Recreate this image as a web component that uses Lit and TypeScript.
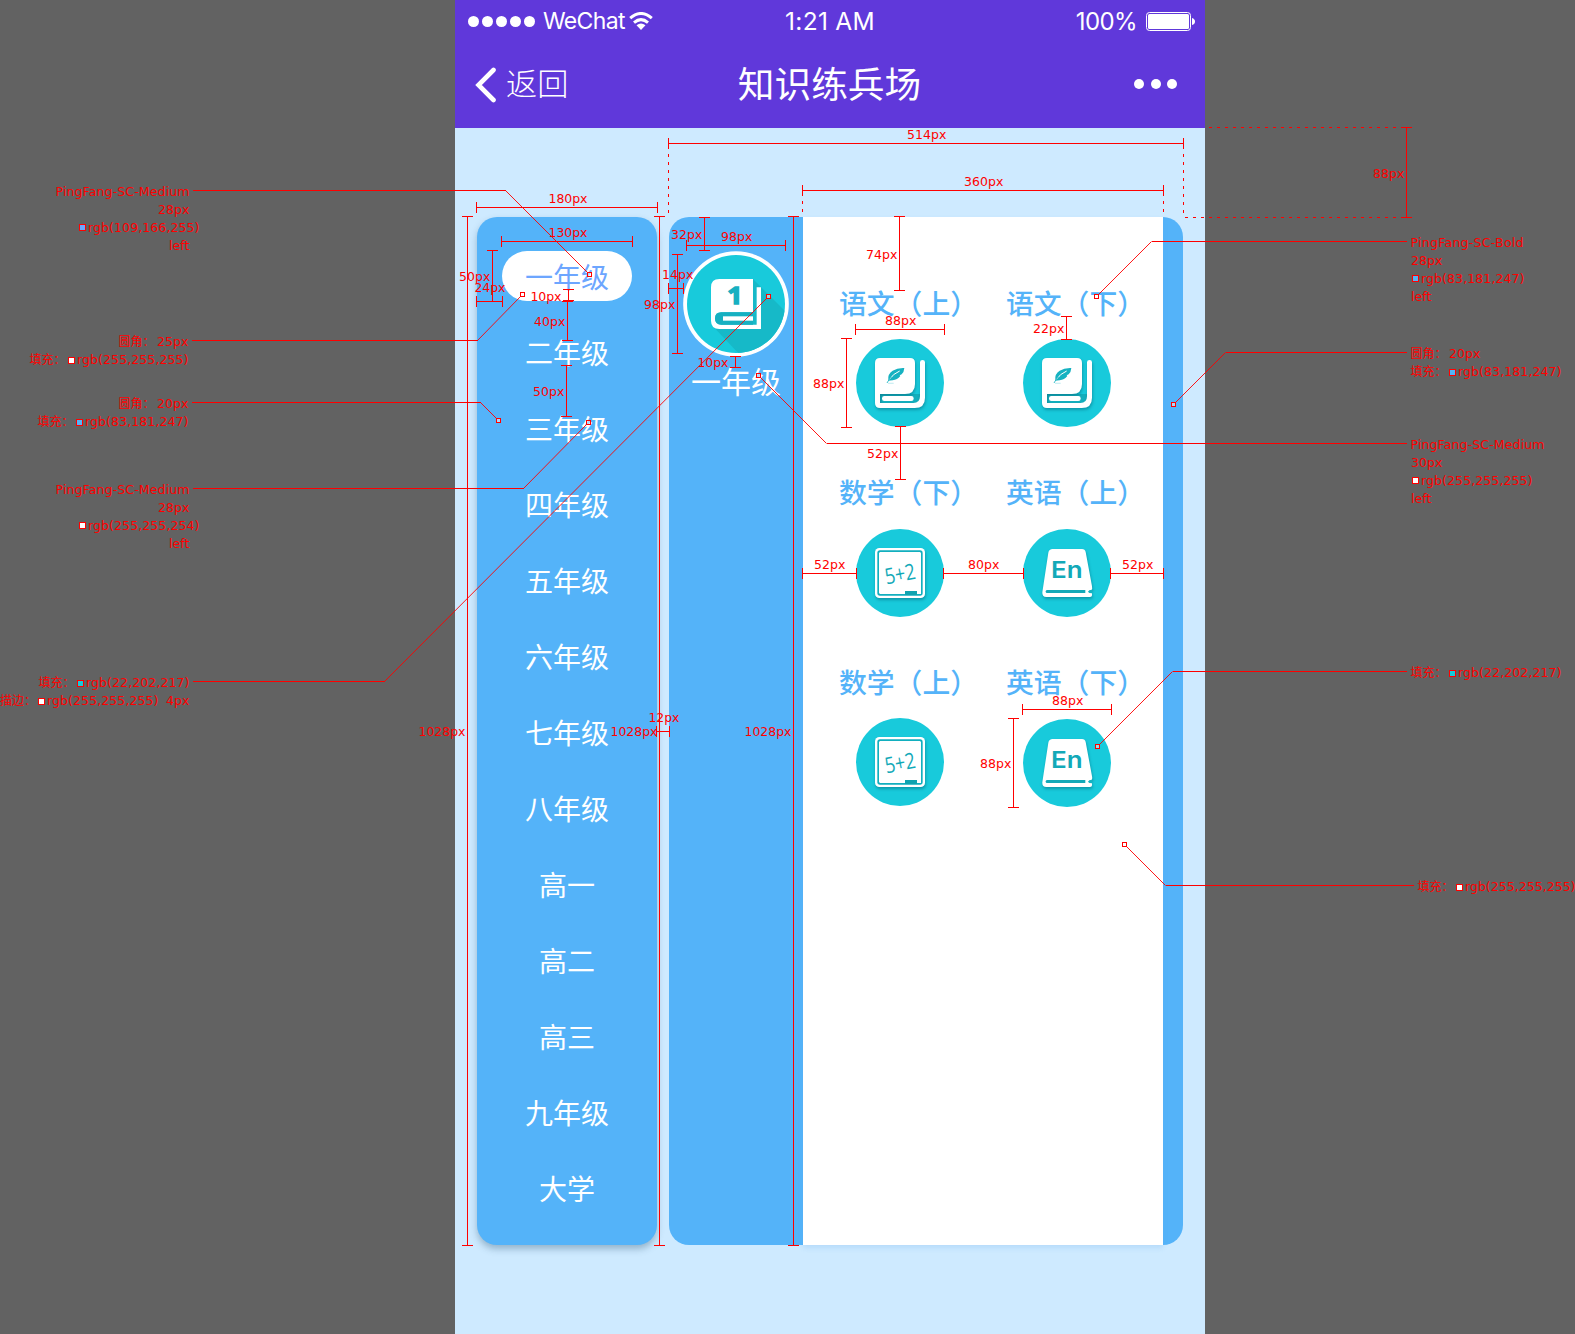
import { LitElement, html, svg, css } from "lit";
import { customElement, property } from "lit/decorators.js";
import { classMap } from "lit/directives/class-map.js";

type Dim = [number, number, number, string, number, number, number];

// Horizontal dimensions: y, x1, x2, label, label x, label baseline, label width
const H_DIMS: Dim[] = [
  [143, 668, 1183, "514px", 907, 139, 39.5],
  [190, 802, 1163, "360px", 964, 186, 39.5],
  [207, 476, 657, "180px", 548.5, 203, 39],
  [241, 501, 632, "130px", 548.5, 237, 39],
  [301, 476, 502, "24px", 474.5, 292, 31],
  [245, 686, 785, "98px", 721, 241, 31.5],
  [288, 668, 683, "14px", 662, 279, 31.5],
  [329, 855, 944, "88px", 885, 325, 31.5],
  [573, 802, 856, "52px", 814, 569, 31.5],
  [573, 943, 1023, "80px", 968, 569, 31.5],
  [573, 1110, 1163, "52px", 1122, 569, 31.5],
  [709, 1022, 1111, "88px", 1052, 705, 31.5],
  [731, 656, 669, "12px", 648.5, 722, 31],
];

// Vertical dimensions: x, y1, y2, label, label x, label baseline, label width
const V_DIMS: Dim[] = [
  [467, 216, 1245, "1028px", 418.5, 736, 47],
  [659, 216, 1245, "1028px", 610.5, 736, 47],
  [793, 216, 1245, "1028px", 744.5, 736, 47],
  [492, 250, 301, "50px", 459, 281, 31.5],
  [568, 289, 300, "10px", 530.5, 301, 31],
  [567, 301, 340, "40px", 534, 326, 31.5],
  [566, 365, 416, "50px", 533, 396, 31.5],
  [704, 217, 250, "32px", 671, 239, 31.5],
  [677, 254, 353, "98px", 644, 309, 31.5],
  [735, 356, 367, "10px", 697.5, 367, 31],
  [899, 216, 290, "74px", 866, 259, 31.5],
  [846, 338, 427, "88px", 813, 388, 31.5],
  [1066, 316, 339, "22px", 1033, 333, 31.5],
  [900, 426, 479, "52px", 867, 458, 31.5],
  [1013, 718, 807, "88px", 980, 768, 31.5],
  [1406, 127, 217, "88px", 1373, 178, 31.5],
];

// Callouts: line start x, y, elbow x, marker x, marker y
const LEADERS: [number, number, number, number, number][] = [
  [193, 190, 505, 589, 274],
  [192, 340, 477, 522, 294],
  [192, 402, 480, 498, 420],
  [193, 488, 523, 588, 422],
  [193, 681, 384, 768, 296],
  [1407, 241, 1151, 1096, 296],
  [1407, 352, 1225, 1173, 404],
  [1407, 443, 826, 758, 375],
  [1407, 671, 1172, 1097, 746],
  [1414, 885, 1165, 1124, 844],
];

// Text notes: text, x, baseline, width
const NOTES: [string, number, number, number][] = [
  ["PingFang-SC-Medium", 55.5, 196, 134],
  ["28px", 158, 214, 31.5],
  ["rgb(109,166,255)", 88, 232, 111.5],
  ["left", 169, 250, 20.5],
  ["25px", 157, 346, 31.5],
  ["rgb(255,255,255)", 77, 364, 111.5],
  ["20px", 157, 408, 31.5],
  ["rgb(83,181,247)", 85, 426, 103.5],
  ["PingFang-SC-Medium", 55.5, 494, 134],
  ["28px", 158, 512, 31.5],
  ["rgb(255,255,254)", 88, 530, 111.5],
  ["left", 169, 548, 20.5],
  ["rgb(22,202,217)", 86, 687, 103.5],
  ["rgb(255,255,255)", 47, 705, 111.5],
  ["4px", 166, 705, 23.5],
  ["PingFang-SC-Bold", 1410.5, 247, 113],
  ["28px", 1411, 265, 31.5],
  ["rgb(83,181,247)", 1421, 283, 103.5],
  ["left", 1411, 301, 20.5],
  ["20px", 1449, 358, 31.5],
  ["rgb(83,181,247)", 1458, 376, 103.5],
  ["PingFang-SC-Medium", 1410.5, 449, 134],
  ["30px", 1411, 467, 31.5],
  ["rgb(255,255,255)", 1421, 485, 111.5],
  ["left", 1411, 503, 20.5],
  ["rgb(22,202,217)", 1458, 677, 103.5],
  ["rgb(255,255,255)", 1465, 891, 110.5],
];

const CJK_NOTES: [string, number, number][] = [
  ["圆角：", 118.5, 346],
  ["填充：", 29.5, 364],
  ["圆角：", 118.5, 408],
  ["填充：", 37.5, 426],
  ["填充：", 38.5, 687],
  ["描边：", 0, 705],
  ["圆角：", 1410.5, 358],
  ["填充：", 1410.5, 376],
  ["填充：", 1410.5, 677],
  ["填充：", 1417.5, 891],
];

const SWATCHES: [number, number, string][] = [
  [79, 224, "#6da6ff"],
  [68, 357, "#fff"],
  [76, 419, "#53b5f7"],
  [79, 522, "#fff"],
  [77, 680, "#16cad9"],
  [38, 698, "#fff"],
  [1412, 275, "#53b5f7"],
  [1449, 369, "#53b5f7"],
  [1412, 477, "#fff"],
  [1449, 670, "#16cad9"],
  [1456, 884, "#fff"],
];

@customElement("spec-overlay")
class SpecOverlay extends LitElement {
  static styles = css`
    :host { display: block; }
    svg { display: block; }
    .rule { stroke: #f00; stroke-width: 1; fill: none; shape-rendering: crispEdges; }
    .dash { stroke-dasharray: 3 5; }
    .slant { stroke: #f00; stroke-width: 1; opacity: 0.9; }
    .marker { stroke: #f00; fill: rgba(255, 255, 255, 0.5); shape-rendering: crispEdges; }
    .swatch { stroke: #f00; shape-rendering: crispEdges; }
    text { fill: #f00; font: 12.5px "DejaVu Sans", Verdana, sans-serif; }
    .cjk { font: 12px "Noto Sans CJK SC", sans-serif; }
  `;
  render() {
    return html`<svg width="1575" height="1334" viewBox="0 0 1575 1334">
      ${H_DIMS.map(([y, a, b]) => svg`<path class="rule" d="M${a} ${y + 0.5}H${b + 1}M${a + 0.5} ${y - 5}v11M${b + 0.5} ${y - 5}v11"/>`)}
      ${V_DIMS.map(([x, a, b]) => svg`<path class="rule" d="M${x + 0.5} ${a}V${b + 1}M${x - 5} ${a + 0.5}h11M${x - 5} ${b + 0.5}h11"/>`)}
      <path class="rule dash" d="M1209 127.5H1401M1185 217.5H1401M668.5 154V215M1183.5 154V215M802.5 201V215M1163.5 201V215"/>
      ${LEADERS.map(([x, y, e, mx, my]) => {
        const sx = mx > e ? -2 : 2;
        const sy = my > y ? -2 : 2;
        return svg`
          <path class="rule" d="M${x} ${y + 0.5}H${e + 0.5}"/>
          <path class="slant" d="M${e + 0.5} ${y + 0.5}L${mx + 0.5 + sx} ${my + 0.5 + sy}"/>
          <rect class="marker" x=${mx - 1.5} y=${my - 1.5} width="4" height="4"/>`;
      })}
      ${SWATCHES.map(([x, y, c]) => svg`<rect class="swatch" x=${x + 0.5} y=${y + 0.5} width="6" height="6" fill=${c}/>`)}
      ${[...H_DIMS, ...V_DIMS].map(([, , , t, x, y, w]) => svg`<text x=${x} y=${y} textLength=${w}>${t}</text>`)}
      ${NOTES.map(([t, x, y, w]) => svg`<text x=${x} y=${y} textLength=${w}>${t}</text>`)}
      ${CJK_NOTES.map(([t, x, y]) => svg`<text class="cjk" x=${x} y=${y}>${t}</text>`)}
    </svg>`;
  }
}

@customElement("subject-icon")
class SubjectIcon extends LitElement {
  @property() kind = "chinese";
  static styles = css`
    :host { display: block; width: 88px; height: 88px; }
    svg { display: block; }
    .lift { filter: drop-shadow(2px 6px 4px rgba(0, 90, 110, 0.45)); }
    .sum { font: 66px "Open Sans", "Noto Sans", sans-serif; fill: #13a9b8; }
    .en { font: 600 68px Inter, "Liberation Sans", sans-serif; fill: #13a9b8; }
  `;
  private art() {
    if (this.kind === "math") {
      return svg`
        <rect class="lift" x="57" y="57" width="150" height="150" rx="13" fill="#fff"/>
        <rect x="64" y="64" width="136" height="136" rx="8" fill="#12afbe"/>
        <path d="M72 69H192L195 72V195H183V186H147V195H72L69 192V72Z" fill="#fff"/>
        <path d="M147 186H183V198H147Z" fill="#0fa3b0"/>
        <text class="sum" x="86" y="158" textLength="92" lengthAdjust="spacingAndGlyphs" transform="rotate(-11 132 134)">5+2</text>`;
    }
    if (this.kind === "english") {
      return svg`
        <path class="lift" d="M89 60H177Q186 60 188 69L207 172Q209 181 205 184L196 187L207 193V199Q207 204 201 204H70Q57 204 58 190L76 71Q78 60 89 60Z" fill="#fff"/>
        <path d="M72 183H187V192H72Q68 192 68 187.500Q68 183 72 183Z" fill="#13a9b8"/>
        <path d="M208 182L199 184L195 188L199 192L208 193Z" fill="#14b3c2"/>
        <text class="en" x="84" y="147" textLength="95" lengthAdjust="spacingAndGlyphs">En</text>`;
    }
    return svg`
      <path d="M72 165H192V192H72Z" fill="#14aebc"/>
      <path class="lift" d="M72 57H162Q177 57 177 72V135Q177 165 147 165H72V192H172Q192 192 192 172V70Q192 63 199.500 63Q207 63 207 70V176Q207 207 176 207H72Q57 207 57 192V72Q57 57 72 57Z" fill="#fff"/>
      <rect x="78" y="171" width="95" height="15" rx="7" fill="#fff"/>
      <path d="M97 121Q95 105 110 95Q124 86 145 87Q144 100 137 106L131 109L133 111Q124 122 110 124Q102 125 98 125Z" fill="#16b2c1"/>
      <path d="M101 121Q110 105 131 96" fill="none" stroke="#fff" stroke-width="3"/>
      <path d="M93 132Q98 121 107 114" fill="none" stroke="#16b2c1" stroke-width="2.500"/>
      <path d="M96 133H113" stroke="#cdeff3" stroke-width="4"/>`;
  }
  render() {
    return html`<svg width="88" height="88" viewBox="0 0 264 264">
      <circle cx="132" cy="132" r="132" fill="#18cadb"/>
      ${this.art()}
    </svg>`;
  }
}

const GRADES = ["一年级", "二年级", "三年级", "四年级", "五年级", "六年级", "七年级", "八年级", "高一", "高二", "高三", "九年级", "大学"];

const SUBJECTS: { label: string; kind: string }[] = [
  { label: "语文（上）", kind: "chinese" },
  { label: "语文（下）", kind: "chinese" },
  { label: "数学（下）", kind: "math" },
  { label: "英语（上）", kind: "english" },
  { label: "数学（上）", kind: "math" },
  { label: "英语（下）", kind: "english" },
];

@customElement("app-root")
class AppRoot extends LitElement {
  static styles = css`
    :host {
      display: block;
      position: relative;
      width: 1575px;
      height: 1334px;
      overflow: hidden;
      background: #626262;
      font-family: "Noto Sans CJK SC", sans-serif;
    }
    * { box-sizing: border-box; }
    svg { display: block; }
    .phone { width: 750px; height: 1334px; margin-left: 455px; background: #ceeaff; }
    .top { height: 128px; background: #6038da; color: #fff; }
    .status {
      display: grid;
      grid-template-columns: 1fr auto 1fr;
      align-items: center;
      height: 41px;
      padding: 0 10px 0 13px;
      font: 23px/41px Inter, "Liberation Sans", sans-serif;
    }
    .carrier, .power { display: flex; align-items: center; }
    .dots { display: flex; gap: 3px; margin-right: 8px; }
    .dots i { width: 11px; height: 11px; border-radius: 50%; background: #fff; }
    .carrier span { letter-spacing: -0.65px; margin-right: 4px; padding-top: 1px; }
    .time { font-size: 24.5px; letter-spacing: 0.3px; margin-right: 3px; }
    .power { justify-content: flex-end; gap: 9px; font-size: 24px; letter-spacing: -0.6px; }
    .nav {
      display: grid;
      grid-template-columns: 1fr auto 1fr;
      align-items: center;
      height: 87px;
      padding: 0 28px 0 20px;
    }
    .back { display: flex; align-items: center; gap: 9px; font-size: 31.2px; font-weight: 300; line-height: 40px; }
    .back span { padding-bottom: 6px; }
    .title { font-size: 36.7px; line-height: 48px; padding: 0 0 6px 7px; }
    .more { display: flex; justify-content: flex-end; gap: 6.500px; padding-bottom: 1px; }
    .more i { width: 10px; height: 10px; border-radius: 50%; background: #fff; }
    .body { display: flex; gap: 12px; padding: 89px 22px 0; }
    .grades {
      width: 180px;
      height: 1028px;
      padding-top: 21px;
      border-radius: 20px;
      background: #54b3f9;
      box-shadow: 0 4px 7px rgba(40, 80, 110, 0.35);
      color: #fff;
      font-size: 28px;
    }
    .grade { display: flex; align-items: center; justify-content: center; height: 76px; }
    .grade span { line-height: 50px; }
    .grade.active span { width: 130px; text-align: center; border-radius: 25px; background: #fff; color: #6da6ff; }
    .detail { display: flex; width: 514px; height: 1028px; padding-right: 20px; border-radius: 20px; background: #54b3f9; }
    .current { display: flex; flex-direction: column; align-items: center; width: 134px; padding-top: 34px; color: #fff; font-size: 30px; }
    .current span { line-height: 44px; margin-top: 1px; }
    .one { font: bold 72px "Open Sans", sans-serif; fill: #16b0c1; stroke: #16b0c1; stroke-width: 4; }
    .subjects {
      display: grid;
      grid-template-columns: 140px 140px;
      grid-auto-rows: 189.5px;
      column-gap: 27px;
      width: 360px;
      height: 1028px;
      padding: 65px 0 0 36px;
      background: #fff;
      box-shadow: 0 3px 5px rgba(83, 160, 230, 0.2);
    }
    .subject { display: flex; flex-direction: column; gap: 17px; }
    .subject:nth-child(3), .subject:nth-child(4) { margin-top: -0.5px; gap: 17.5px; }
    .subject:nth-child(6) { gap: 18px; }
    .label { font-size: 27.8px; line-height: 40px; color: #54b3f9; white-space: nowrap; font-weight: 500; }
    .subject subject-icon { margin-left: 17px; }
    .overlay { position: absolute; left: 0; top: 0; }
  `;

  render() {
    return html`
      <div class="phone">
        <header class="top">
          <div class="status">
            <div class="carrier">
              <div class="dots"><i></i><i></i><i></i><i></i><i></i></div>
              <span>WeChat</span>
              <svg width="24" height="18" viewBox="0 0 24 18">
                <g fill="none" stroke="#fff" stroke-width="3">
                  <path d="M1.200 6.200Q12 -3.200 22.800 6.200"/>
                  <path d="M5 10.600Q12 4.600 19 10.600"/>
                </g>
                <path d="M12 18L7.500 13.300Q12 9.800 16.500 13.300Z" fill="#fff"/>
              </svg>
            </div>
            <div class="time">1:21 AM</div>
            <div class="power">
              <span>100%</span>
              <svg width="49" height="19" viewBox="0 0 49 19">
                <rect x="0.500" y="0.500" width="44" height="18" rx="3" fill="none" stroke="#fff"/>
                <rect x="2" y="2" width="41" height="15" rx="1.500" fill="#fff"/>
                <path d="M46 6Q49 7 49 9.500Q49 12 46 13Z" fill="#fff"/>
              </svg>
            </div>
          </div>
          <div class="nav">
            <div class="back">
              <svg width="22" height="36" viewBox="0 0 22 36">
                <path d="M18.500 3L3.500 18L18.500 33" fill="none" stroke="#fff" stroke-width="4.600" stroke-linecap="round" stroke-linejoin="miter"/>
              </svg>
              <span>返回</span>
            </div>
            <div class="title">知识练兵场</div>
            <div class="more"><i></i><i></i><i></i></div>
          </div>
        </header>
        <main class="body">
          <nav class="grades">
            ${GRADES.map((g, i) => html`<div class=${classMap({ grade: true, active: i === 0 })}><span>${g}</span></div>`)}
          </nav>
          <section class="detail">
            <div class="current">
              <svg width="106" height="106" viewBox="699 153 318 318">
                <defs><clipPath id="disc"><circle cx="858" cy="312" r="147"/></clipPath></defs>
                <circle cx="858" cy="312" r="158.500" fill="#fff"/>
                <circle cx="858" cy="312" r="147" fill="#18cadb"/>
                <path d="M909 237L1080 408L960 560L790 380L850 300Z" fill="#16b9c8" clip-path="url(#disc)"/>
                <path d="M808 237H909V337H814Q795 337 795 355.500Q795 374 814 374H920V262H933V387H808Q783 387 783 362V262Q783 237 808 237Z" fill="#fff"/>
                <path d="M814 337H909V374H814Q795 374 795 355.500Q795 337 814 337Z" fill="#16b0c1"/>
                <rect x="819" y="349" width="90" height="13" fill="#fff"/>
                <text class="one" x="832" y="313" textLength="46" lengthAdjust="spacingAndGlyphs">1</text>
              </svg>
              <span>一年级</span>
            </div>
            <div class="subjects">
              ${SUBJECTS.map((s) => html`
                <div class="subject">
                  <div class="label">${s.label}</div>
                  <subject-icon kind=${s.kind}></subject-icon>
                </div>`)}
            </div>
          </section>
        </main>
      </div>
      <spec-overlay class="overlay"></spec-overlay>
    `;
  }
}
